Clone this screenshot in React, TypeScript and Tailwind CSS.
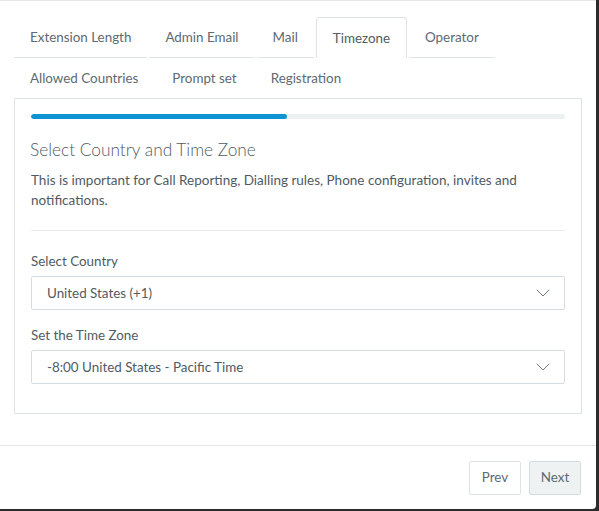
import { ChevronDown } from "lucide-react";

const rowOne = ["Extension Length", "Admin Email", "Mail", "Timezone", "Operator"];
const rowTwo = ["Allowed Countries", "Prompt set", "Registration"];

function Tab({ label, active }: { label: string; active?: boolean }) {
  return (
    <div
      className={
        active
          ? "mr-[2px] h-[41px] px-4 flex items-center rounded-t-[3px] border border-b-0 border-[#dde4e6] bg-white text-[#4f5b63]"
          : "mr-[2px] h-[41px] px-4 flex items-center border-b border-[#dde4e6] text-[#5d6a72]"
      }
    >
      {label}
    </div>
  );
}

function SelectBox({ value }: { value: string }) {
  return (
    <div className="h-[34px] flex items-center justify-between border border-[#d3dcdf] rounded-[2px] pl-[15px] pr-[9px] text-[#4f5b63]">
      <span>{value}</span>
      <ChevronDown className="h-6 w-6 text-[#70787d]" strokeWidth={1} />
    </div>
  );
}

export default function App() {
  return (
    <div className="min-h-[511px] bg-[#2b2b2b] text-[13.4px] font-['Lato',sans-serif]">
      <div className="w-[596px] h-[509px] bg-white border-t border-[#e4e7e8] rounded-br-[4px] flex flex-col">
        <div className="px-[14px] pt-[15px] flex-1">
          <div className="flex flex-wrap pt-[1px]">
            {rowOne.map((t) => (
              <Tab key={t} label={t} active={t === "Timezone"} />
            ))}
          </div>
          <div className="flex">
            {rowTwo.map((t) => (
              <div key={t} className="mr-[2px] h-[40px] px-4 flex items-center text-[#5d6a72]">
                {t}
              </div>
            ))}
          </div>
          <div className="border border-[#dde4e6] px-4 pt-[15px] pb-[29px]">
            <div className="h-[5px] rounded-full bg-[#eef1f2] overflow-hidden">
              <div className="h-full w-[48%] rounded-full bg-[#0e93d3]" />
            </div>
            <h2 className="mt-[18px] -ml-[1px] text-[17.3px] leading-[26px] font-light text-[#4f5b63]">
              Select Country and Time Zone
            </h2>
            <p className="mt-[7px] text-[13.5px] leading-[20px] text-[#4f5b63]">
              This is important for Call Reporting, Dialling rules, Phone configuration, invites and notifications.
            </p>
            <div className="mt-[20px] border-t border-[#e8ecee]" />
            <div className="mt-[20px] leading-[20px] text-[#4f5b63]">Select Country</div>
            <div className="mt-[5px]">
              <SelectBox value="United States (+1)" />
            </div>
            <div className="mt-[15px] leading-[20px] text-[#4f5b63]">Set the Time Zone</div>
            <div className="mt-[5px]">
              <SelectBox value="-8:00 United States - Pacific Time" />
            </div>
          </div>
        </div>
        <div className="border-t border-[#e4e7e8] h-[64px] px-[15px] flex items-center justify-end gap-2">
          <button className="h-[34px] w-[52px] border border-[#dde4e6] rounded-[2px] bg-white text-[#5d6a72]">
            Prev
          </button>
          <button className="h-[34px] w-[52px] border border-[#d3dcdf] rounded-[2px] bg-[#eef2f3] text-[#5d6a72]">
            Next
          </button>
        </div>
      </div>
    </div>
  );
}
